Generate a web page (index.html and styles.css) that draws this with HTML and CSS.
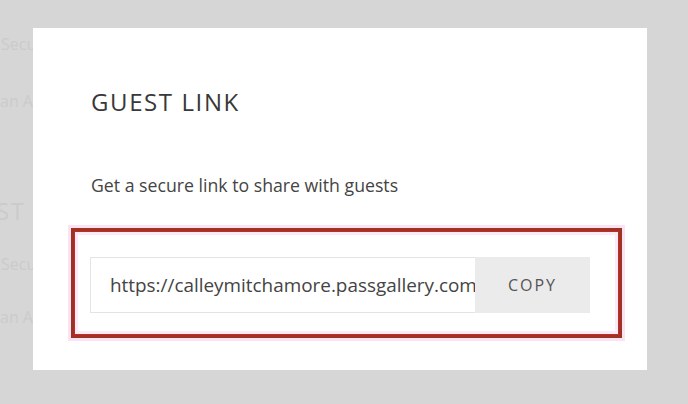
FILE: index.html
```html
<!DOCTYPE html>
<html>
<head>
<meta charset="utf-8">
<link rel="stylesheet" href="styles.css">
</head>
<body>
<div class="page">
  <div class="bg-line bg-first">Secure link</div>
  <div class="bg-line bg-second">an Access</div>
  <div class="bg-heading">GUEST LINK</div>
  <div class="bg-line bg-third">Secure link</div>
  <div class="bg-line bg-fourth">an Access</div>
</div>
<div class="modal">
  <h2 class="title">GUEST LINK</h2>
  <p class="subtitle">Get a secure link to share with guests</p>
  <div class="highlight">
    <div class="link-row">
      <div class="link-input"><span class="link-text">https://calleymitchamore.passgallery.com</span></div>
      <button class="copy-btn">COPY</button>
    </div>
  </div>
</div>
</body>
</html>
```

FILE: styles.css
```css
html, body {
  margin: 0;
  padding: 0;
  width: 688px;
  height: 404px;
  overflow: hidden;
  background: #d6d6d6;
  font-family: "Open Sans", "Noto Sans", sans-serif;
}

.page {
  display: flex;
  flex-direction: column;
  padding-top: 33px;
  color: #cbcbcb;
  white-space: nowrap;
}

.bg-line {
  font-size: 16px;
  line-height: 22px;
  margin-left: 1px;
}

.bg-second {
  margin-top: 35px;
  margin-left: 0;
}

.bg-heading {
  font-size: 24px;
  line-height: 30px;
  letter-spacing: 1.6px;
  margin-top: 84px;
  margin-left: -57px;
}

.bg-third {
  margin-top: 27px;
}

.bg-fourth {
  margin-top: 31px;
  margin-left: 0;
}

.modal {
  position: absolute;
  left: 33px;
  top: 28px;
  width: 614px;
  height: 342px;
  box-sizing: border-box;
  background: #ffffff;
  padding: 58px 0 0 58px;
  display: flex;
  flex-direction: column;
}

.title {
  margin: 0;
  font-size: 24px;
  line-height: 32px;
  font-weight: 400;
  letter-spacing: 1.6px;
  color: #383838;
}

.subtitle {
  margin: 54px 0 0 0;
  font-size: 17.7px;
  line-height: 26px;
  color: #444444;
}

.highlight {
  margin: 30px 0 0 -20px;
  width: 551px;
  height: 110px;
  box-sizing: border-box;
  border: 3px solid #9c3424;
  box-shadow: 0 0 0 3px #fde2f4, inset 0 0 0 1px #c62a26, inset 0 0 0 4px #fdeaf8;
  padding: 26px 0 0 16px;
}

.link-row {
  display: flex;
  width: 500px;
  height: 56px;
}

.link-input {
  width: 385px;
  box-sizing: border-box;
  border: 1px solid #e4e4e4;
  border-right: none;
  padding: 0 0 0 19px;
  display: flex;
  align-items: center;
  white-space: nowrap;
  overflow: hidden;
}

.link-text {
  font-size: 18.9px;
  color: #444444;
}

.copy-btn {
  width: 115px;
  border: none;
  background: #ebebeb;
  font-family: "Open Sans", "Noto Sans", sans-serif;
  font-size: 16px;
  letter-spacing: 2px;
  color: #555555;
  padding: 0;
}
```
